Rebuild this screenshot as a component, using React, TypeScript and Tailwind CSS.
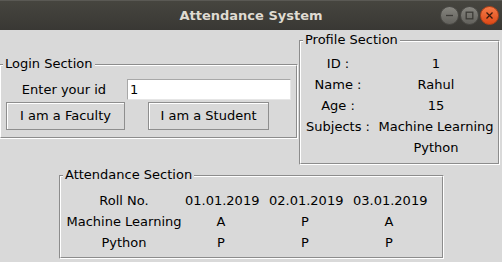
import type { ReactNode } from 'react';

const FONT = { fontFamily: '"DejaVu Sans", sans-serif' };

// Tk "groove" LabelFrame: outer dark/light, inner light/dark
function Frame({ label, className, children }: { label: string; className: string; children: ReactNode }) {
  return (
    <div className={`relative border border-t-[#8c8c8c] border-l-[#8c8c8c] border-b-white border-r-white ${className}`}>
      <div className="h-full border border-t-white border-l-white border-b-[#8c8c8c] border-r-[#8c8c8c]">
        {children}
      </div>
      <span className="absolute left-[3px] top-[-9px] bg-[#d9d9d9] px-[2px] text-[13px] leading-[16px] text-black">
        {label}
      </span>
    </div>
  );
}

function TkButton({ children, className }: { children: ReactNode; className: string }) {
  return (
    <button className={`h-[28px] border border-[#8e8e8e] bg-[#d9d9d9] text-[13px] text-black shadow-[inset_1px_1px_0_#ffffff] ${className}`}>
      {children}
    </button>
  );
}

function WinButton({ kind }: { kind: 'min' | 'max' | 'close' }) {
  const close = kind === 'close';
  return (
    <div
      className={`flex h-[19px] w-[19px] items-center justify-center rounded-full border ${
        close
          ? 'border-[#b2431a] bg-gradient-to-b from-[#f47a46] to-[#dd4814]'
          : 'border-[#4a4945] bg-gradient-to-b from-[#86857f] to-[#62615c]'
      }`}
    >
      <svg width="9" height="9" viewBox="0 0 9 9" fill="none" stroke={close ? '#3a1a0c' : '#3c3b37'} strokeWidth="1.3">
        {kind === 'min' && <path d="M1 4.5h7" />}
        {kind === 'max' && <rect x="1.2" y="1.2" width="6.6" height="6.6" />}
        {kind === 'close' && <path d="M1.5 1.5l6 6M7.5 1.5l-6 6" />}
      </svg>
    </div>
  );
}

export default function App() {
  const profile: [string, string][] = [
    ['ID :', '1'],
    ['Name :', 'Rahul'],
    ['Age :', '15'],
    ['Subjects :', 'Machine Learning'],
    ['', 'Python'],
  ];
  const attendance = [
    ['Roll No.', '01.01.2019', '02.01.2019', '03.01.2019'],
    ['Machine Learning', 'A', 'P', 'A'],
    ['Python', 'P', 'P', 'P'],
  ];

  return (
    <div className="h-[262px] w-[502px] overflow-hidden bg-[#d9d9d9] text-black" style={FONT}>
      {/* title bar */}
      <div className="relative flex h-[30px] items-center justify-center border-t border-[#5a5954] bg-gradient-to-b from-[#46453f] to-[#393834]">
        <span className="text-[13px] font-bold text-[#dfdbd2]">Attendance System</span>
        <div className="absolute right-[3px] top-[5px] flex gap-[1px]">
          <WinButton kind="min" />
          <WinButton kind="max" />
          <WinButton kind="close" />
        </div>
      </div>

      <div className="flex items-start">
        <Frame label="Login Section" className="-ml-px mt-[34px] h-[75px] w-[299px]">
          <div className="flex items-center pt-[13px]">
            <span className="w-[126px] text-center text-[13px]">Enter your id</span>
            <div className="flex h-[21px] w-[164px] items-center border border-t-[#a8a8a8] border-l-[#a8a8a8] border-b-[#e6e6e6] border-r-[#e6e6e6] bg-white pl-[2px] text-[13px]">
              1
            </div>
          </div>
          <div className="mt-[2px] flex">
            <TkButton className="ml-[5px] w-[119px]">I am a Faculty</TkButton>
            <TkButton className="ml-[23px] w-[121px]">I am a Student</TkButton>
          </div>
        </Frame>

        <Frame label="Profile Section" className="ml-px mt-[10px] h-[125px] w-[201px]">
          <div className="grid grid-cols-[72px_124px] pl-[1px] pt-[11px] text-[13px] leading-[21px]">
            {profile.map(([k, v], i) => (
              <div key={i} className="contents">
                <span className="text-center">{k}</span>
                <span className="text-center">{v}</span>
              </div>
            ))}
          </div>
        </Frame>
      </div>

      <Frame label="Attendance Section" className="ml-[59px] mt-[10px] h-[84px] w-[385px]">
        <div className="grid grid-cols-[122px_72px_84px_84px] pl-[2px] pt-[13px] text-[13px] leading-[21px]">
          {attendance.map((row, r) =>
            row.map((cell, c) => (
              <span key={`${r}-${c}`} className={`text-center ${c >= 2 ? 'pl-3' : ''}`}>
                {cell}
              </span>
            ))
          )}
        </div>
      </Frame>
    </div>
  );
}
